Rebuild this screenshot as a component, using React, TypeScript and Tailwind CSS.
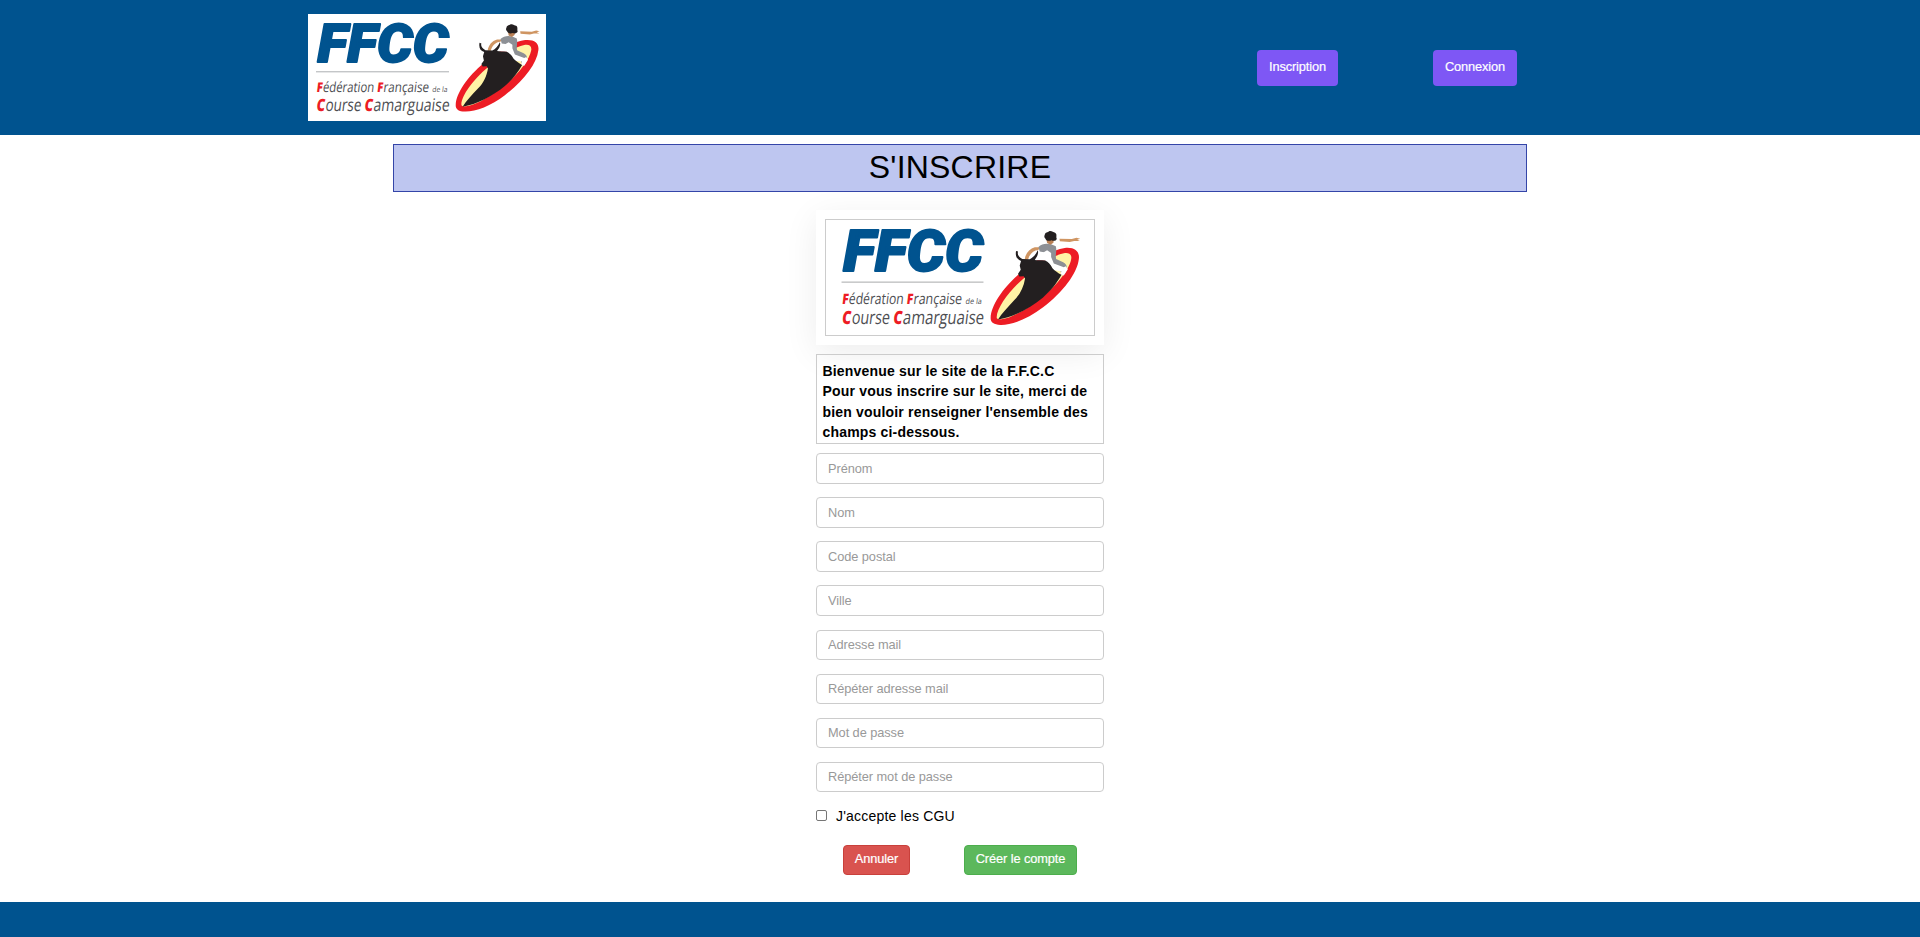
const RED = '#ed1c24';
const INK = '#4d4e52';

function Word({ x, y, w, size, fill, bold, children }: { x: number; y: number; w: number; size: number; fill: string; bold?: boolean; children: string }) {
  return (
    <text transform={`translate(${x} ${y}) skewX(-7)`} fontSize={size} fill={fill} textLength={w} lengthAdjust="spacingAndGlyphs" fontWeight={bold ? 800 : 400}>
      {children}
    </text>
  );
}

function Logo({ className }: { className: string }) {
  return (
    <svg className={className} viewBox="0 0 238 107" preserveAspectRatio="none" fontFamily="'Open Sans', 'Noto Sans', sans-serif">
      <rect width="238" height="107" fill="#fff" />
      <text x="9.6" y="47.6" fontSize="54" fontFamily="Roboto, sans-serif" fontWeight="900" fontStyle="italic" fill="#00538f" stroke="#00538f" strokeWidth="1.8" strokeLinejoin="round" textLength="131" lengthAdjust="spacingAndGlyphs">
        FFCC
      </text>
      <path d="M8 57.8H141" stroke="#a3a5a8" strokeWidth="0.9" />
      <Word x={8.2} y={78} w={6} size={13.4} fill={RED} bold>F</Word>
      <Word x={14.4} y={78} w={51.4} size={14} fill={INK}>édération</Word>
      <Word x={68.7} y={78} w={6} size={13.4} fill={RED} bold>F</Word>
      <Word x={75} y={78} w={45.5} size={14} fill={INK}>rançaise</Word>
      <Word x={124} y={78} w={15.2} size={7.5} fill={INK}>de la</Word>
      <Word x={8} y={97} w={8.5} size={17} fill={RED} bold>C</Word>
      <Word x={17} y={97} w={35.8} size={17.5} fill={INK}>ourse</Word>
      <Word x={56} y={97} w={8.5} size={17} fill={RED} bold>C</Word>
      <Word x={65} y={97} w={76} size={17.5} fill={INK}>amarguaise</Word>
      <g transform="translate(137.4 0.4) scale(0.313 0.3086)">
        <path d="M33 293C34 255 72 200 122 158C165 122 215 88 255 83C285 80 300 94 297 116C292 160 250 215 190 262C145 297 95 316 62 315C42 314 32 307 33 293Z" fill={RED} />
        <path d="M51 292C52 262 90 210 135 172C180 134 222 104 252 99C268 96 277 103 274 117C268 150 225 205 170 245C128 275 90 296 66 298C55 299 51 297 51 292Z" fill="#fff3a6" />
        <path d="M176 92L190 92L222 88L226 96L210 122L170 120Z" fill="#fff" />
        <path d="M135 118C137 99 149 86 165 81L180 81L176 89C160 90 149 102 145 118Z" fill="#cf9562" />
        <path d="M176 80C186 70 200 68 214 72L228 78C232 92 226 100 229 116L250 126C262 132 264 142 256 160L246 164L240 148L214 136L204 110L192 96L180 94Z" fill="#8d9095" />
        <path d="M188 98L202 90L214 98L214 110L222 130L252 141L258 138L264 147L252 166L242 163L245 153L222 150L200 130Z" fill="#fff" />
        <path d="M109 92C106 108 112 118 124 122L120 136L123 149L115 161L119 169L132 168L136 175C132 200 122 222 104 240C86 260 66 280 55 299C100 292 152 264 190 232C210 215 231 190 245 164C234 158 226 152 218 144C212 132 206 126 196 121C184 119 174 121 165 119L172 108C175 101 176 95 174 90C168 103 160 112 150 117L128 116C118 111 112 103 115 94Z" fill="#231f20" />
        <path d="M200 57L222 56L221 67L212 73L202 68Z" fill="#b98055" />
        <path d="M195 43C196 35 205 36 207 33C215 30 220 36 226 37C233 42 228 49 231 55C229 62 221 63 215 60C209 63 199 62 197 55C193 51 193 47 195 43Z" fill="#231f20" />
        <path d="M239 55L276 56L290 52L301 55L292 58L300 62L283 62L270 65L240 63Z" fill="#cf9562" />
      </g>
    </svg>
  );
}

const fields = ['Prénom', 'Nom', 'Code postal', 'Ville', 'Adresse mail', 'Répéter adresse mail', 'Mot de passe', 'Répéter mot de passe'];

export default function App() {
  return (
    <div className="flex h-[937px] flex-col overflow-hidden bg-white font-['Liberation_Sans',Arial,sans-serif] text-black">
      <header className="flex h-[135px] shrink-0 justify-between bg-[#00538f] pt-[14px] pr-[403px] pl-[308px]">
        <Logo className="h-[107px] w-[238px] overflow-visible" />
        <nav className="mt-9 flex gap-[95px] text-[12.8px] text-white [-webkit-text-stroke:0.2px]">
          <button className="flex h-9 w-[81px] justify-center rounded-[4px] bg-[#7e57f5] pt-[7px] tracking-[-0.12px]">Inscription</button>
          <button className="flex h-9 w-[84px] justify-center rounded-[4px] bg-[#7e57f5] pt-[7px] tracking-[-0.12px]">Connexion</button>
        </nav>
      </header>
      <main className="flex flex-1 flex-col items-center">
        <h1 className="mt-[9px] h-12 w-[1134px] border border-[#3445a8] bg-[#bec6f0] text-center text-[32px] leading-[44px] tracking-[0.2px]">S'INSCRIRE</h1>
        <form className="mt-[18px] flex w-[288px] flex-col">
          <div className="h-[135px] px-[9px] pt-[9px] shadow-[0_8px_32px_rgba(0,0,0,0.075)]">
            <div className="flex h-[117px] justify-center border border-[#ccc]">
              <Logo className="h-[115px] w-[254px] overflow-visible" />
            </div>
          </div>
          <p className="mt-[9px] h-[90px] border border-[#ccc] pt-[6px] pl-[5.5px] text-[14px] leading-[20.4px] font-bold tracking-[0.18px] whitespace-nowrap">
            Bienvenue sur le site de la F.F.C.C<br />
            Pour vous inscrire sur le site, merci de<br />
            bien vouloir renseigner l'ensemble des<br />
            champs ci-dessous.
          </p>
          <div className="mt-[9.2px] flex flex-col gap-[13.7px]">
            {fields.map((name) => (
              <input key={name} placeholder={name} className="h-[30.4px] w-full rounded-[4px] border border-[#ccc] px-[11px] text-[12.8px] tracking-[-0.07px] placeholder:text-[#999]" />
            ))}
          </div>
          <label className="mt-[14.7px] flex h-[20px] items-center text-[14px] tracking-[0.2px]">
            <span className="relative -top-px mr-[9px] size-[11px] rounded-[2px] border border-[#767676] bg-white" />
            J'accepte les CGU
          </label>
          <div className="mt-[18px] flex justify-between px-[27px] text-[12.8px] text-white [-webkit-text-stroke:0.2px]">
            <button className="flex h-[30px] w-[67px] justify-center rounded-[4px] border border-[#c9403b] bg-[#d9534f] pt-[3px] tracking-[-0.1px]">Annuler</button>
            <button className="flex h-[30px] w-[113px] justify-center rounded-[4px] border border-[#4cae4c] bg-[#5cb85c] pt-[3px] tracking-[-0.1px]">Créer le compte</button>
          </div>
        </form>
      </main>
      <footer className="h-[35px] shrink-0 bg-[#00538f]" />
    </div>
  );
}
